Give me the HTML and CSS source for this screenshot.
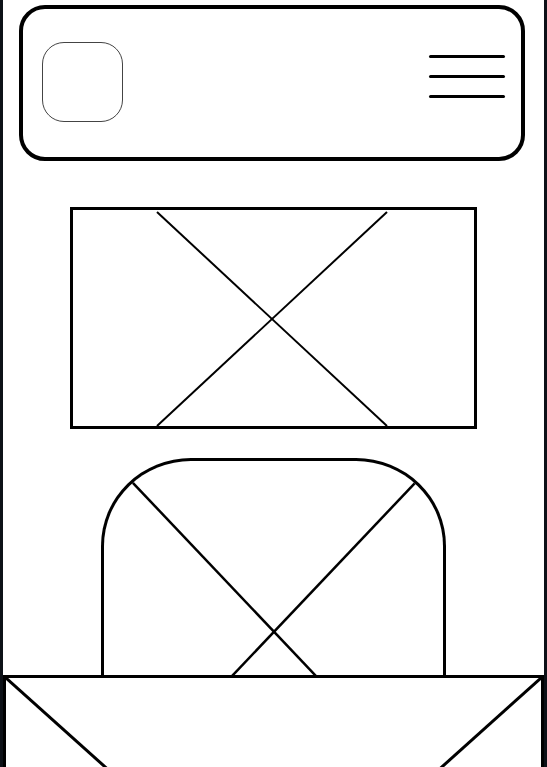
FILE: index.html
```html
<!DOCTYPE html>
<html lang="en">
<head>
  <meta charset="UTF-8">
  <meta name="viewport" content="width=device-width, initial-scale=1.0">
  <title>Wireframe</title>
  <link rel="stylesheet" href="styles.css">
</head>
<body>
  <div class="page">
    <!-- Cabecera -->
    <header class="header">
      <div class="logo"></div>
      <div class="menu">
        <span></span>
        <span></span>
        <span></span>
      </div>
    </header>

    <!-- Imagen principal -->
    <div class="hero">
      <svg viewBox="0 0 401 216" preserveAspectRatio="none">
        <line x1="84" y1="2" x2="314" y2="216" />
        <line x1="314" y1="2" x2="84" y2="216" />
      </svg>
    </div>

    <!-- Tarjeta -->
    <div class="card">
      <svg viewBox="0 0 339 214" preserveAspectRatio="none">
        <line x1="-7" y1="-16" x2="393" y2="406" />
        <line x1="347" y1="-16" x2="-53" y2="406" />
      </svg>
    </div>

    <!-- Bloque inferior -->
    <div class="footer-box">
      <svg viewBox="0 0 535 480" preserveAspectRatio="none">
        <line x1="0" y1="0" x2="535" y2="480" />
        <line x1="535" y1="0" x2="0" y2="480" />
      </svg>
    </div>
  </div>
</body>
</html>
```

FILE: styles.css
```css
html, body {
  margin: 0;
  height: 100%;
  overflow: hidden;
  background-color: #0d1117;
}
.page {
  margin: 0 3px;
  height: 100%;
  padding-top: 5px;
  box-sizing: border-box;
  background: #fff;
  overflow: hidden;
}
.header {
  margin: 0 19px 0 16px;
  height: 156px;
  box-sizing: border-box;
  border: 4px solid #000;
  border-radius: 26px;
  padding: 0 16px 0 19px;
  display: flex;
  align-items: center;
  justify-content: space-between;
}
.logo {
  width: 81px;
  height: 80px;
  box-sizing: border-box;
  border: 1px solid #444;
  border-radius: 22px;
  margin-top: -2px;
}
.menu {
  width: 76px;
  display: flex;
  flex-direction: column;
  gap: 17px;
  margin-top: -14px;
}
.menu span {
  display: block;
  height: 3px;
  border-radius: 2px;
  background: #000;
}
.hero {
  margin: 46px 0 0 67px;
  width: 407px;
  height: 222px;
  box-sizing: border-box;
  border: 3px solid #000;
}
svg {
  display: block;
  width: 100%;
  height: 100%;
  overflow: visible;
}
line {
  stroke: #000;
  stroke-width: 2;
  vector-effect: non-scaling-stroke;
}
.card {
  margin: 29px 0 0 98px;
  width: 345px;
  height: 217px;
  box-sizing: border-box;
  border: 3px solid #000;
  border-bottom: none;
  border-radius: 90px 90px 0 0 / 88px 88px 0 0;
  overflow: hidden;
}
.card svg {
  overflow: hidden;
  height: 214px;
}
.card line {
  stroke-width: 2.5;
}
.footer-box {
  height: 486px;
  box-sizing: border-box;
  border: 3px solid #000;
  overflow: hidden;
}
.footer-box line {
  stroke-width: 3;
}
```
